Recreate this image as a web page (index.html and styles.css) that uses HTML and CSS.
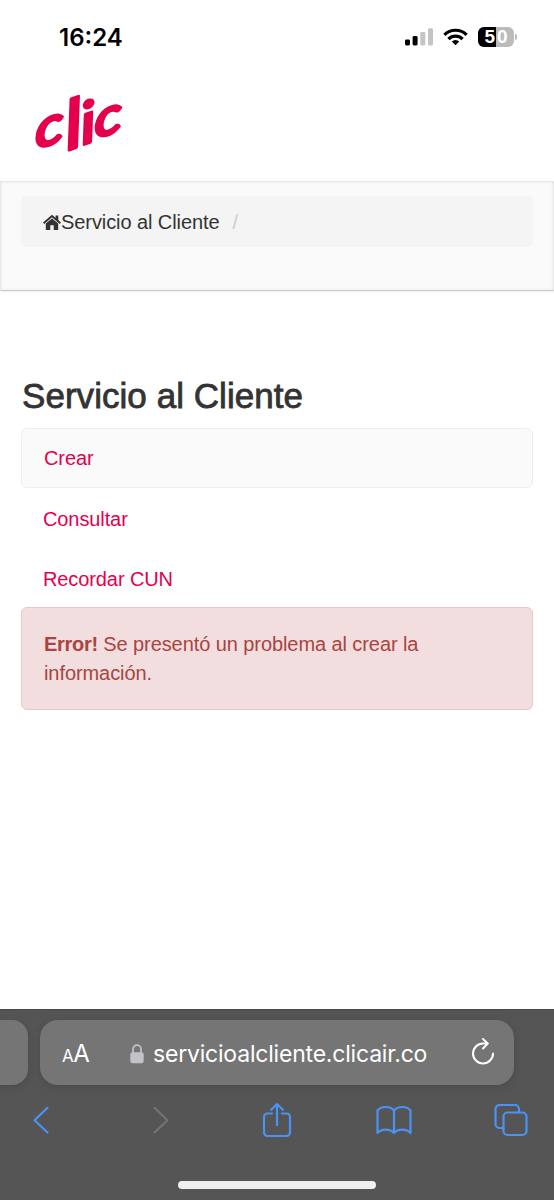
FILE: index.html
```html
<!DOCTYPE html>
<html lang="es">
<head>
<meta charset="utf-8">
<title>Servicio al Cliente</title>
<link rel="stylesheet" href="styles.css">
</head>
<body>
<div class="status">
  <span class="time">16:24</span>
  <div class="status-icons">
    <svg width="28" height="18" viewBox="0 0 28 18"><rect x="0" y="11.5" width="5" height="6" rx="1.4"/><rect x="7.6" y="8" width="5" height="9.5" rx="1.4"/><g fill="#c4c4c4"><rect x="15.3" y="4" width="5" height="13.5" rx="1.4"/><rect x="23" y="0.3" width="5" height="17.2" rx="1.4"/></g></svg>
    <svg class="wifi" width="25" height="18" viewBox="0 0 25 18"><g fill="none" stroke="#000" stroke-width="3.2"><path d="M1.4 6.8A15.8 15.8 0 0 1 23.6 6.8"/><path d="M5.4 11A10 10 0 0 1 19.6 11"/></g><path d="M8.8 13.4A5.3 5.3 0 0 1 16.2 13.4L12.5 17.2Z"/></svg>
    <div class="battery"><span class="level">5</span><span>0</span></div>
    <i class="battery-tip"></i>
  </div>
</div>
<header class="brand">
  <svg width="110" height="90" viewBox="24 80 110 90"><text class="logo" transform="translate(35 149) skewY(-16) scale(1.14 1)" x="0.500 28 41.500 52.500" y="0 11 9.500 6.500" rotate="0 -5 -5 0"><tspan font-size="54">c</tspan><tspan font-size="68">l</tspan><tspan font-size="58">i</tspan><tspan font-size="52">c</tspan></text></svg>
</header>
<nav class="subnav">
  <div class="breadcrumb">
    <svg width="18" height="17" viewBox="0 0 18 17"><path d="M9 4.500L15.200 9.500V16H10.700V11.300H7.300V16H2.800V9.500Z"/><path d="M.6 9.200L9 2L17.400 9.200" fill="none" stroke="#333" stroke-width="2"/><path d="M12.600 1.500H15.300V7L12.600 4.800Z"/></svg>
    <span>Servicio al Cliente</span><span class="slash">/</span>
  </div>
</nav>
<main class="content">
  <h1 class="title">Servicio al Cliente</h1>
  <div class="menu">
    <a class="item active">Crear</a>
    <a class="item">Consultar</a>
    <a class="item last">Recordar CUN</a>
  </div>
  <div class="alert"><b>Error!</b> Se presentó un problema al crear la información.</div>
</main>
<footer class="browser">
  <div class="tabs">
    <div class="previous"></div>
    <div class="address">
      <span class="aa"><small>A</small>A</span>
      <svg class="lock" width="14" height="20" viewBox="0 0 14 20"><rect x="0.3" y="8.3" width="13.4" height="11" rx="2.2" fill="#c3c2ca"/><path d="M3 9V5.2a4 4 0 0 1 8 0V9" fill="none" stroke="#c3c2ca" stroke-width="1.7"/></svg>
      <span class="url">servicioalcliente.clicair.co</span>
      <svg class="reload" width="24" height="28" viewBox="0 0 24 28" fill="none" stroke="#fff" stroke-width="2" stroke-linecap="round" stroke-linejoin="round"><path d="M16.500 5.500H12A10 10 0 1 0 22 15.500"/><path d="M12 1L16.700 5.500L12 10.500"/></svg>
    </div>
  </div>
  <div class="tools">
    <svg width="18" height="30" viewBox="0 0 18 30"><path d="M15.500 2.800L2.500 15.200L15.500 27.500"/></svg>
    <svg class="off" width="18" height="30" viewBox="0 0 18 30"><path d="M2.500 2.800L15.500 15.200L2.500 27.500"/></svg>
    <svg class="share" width="30" height="36" viewBox="0 0 30 36"><path d="M10 11.500H5.500a3.500 3.500 0 0 0-3.500 3.500V30.500a3.500 3.500 0 0 0 3.500 3.500H24.500a3.500 3.500 0 0 0 3.500-3.500V15a3.500 3.500 0 0 0-3.500-3.500H20M15 23V2.500M9.200 7.800L15 2L20.800 7.800"/></svg>
    <svg width="36" height="30" viewBox="0 0 36 30"><path d="M18 5.500C14.500.8 5 .8 1.500 5.500V28C5 23.500 14.500 23.500 18 28C21.500 23.500 31 23.500 34.500 28V5.500C31 .8 21.500 .8 18 5.500V28"/></svg>
    <svg width="34" height="34" viewBox="0 0 34 34"><rect x="9.500" y="9.500" width="23" height="22.500" rx="4"/><path d="M9.500 25H5.500a4 4 0 0 1-4-4V6a4 4 0 0 1 4-4H21a4 4 0 0 1 4 4v3.500"/></svg>
  </div>
  <div class="home"></div>
</footer>
</body>
</html>
```
FILE: styles.css
```css
* { box-sizing: border-box; }
body { margin: 0; width: 554px; height: 1200px; display: flex; flex-direction: column; overflow: hidden; background: #fff; color: #333; font: 20px/28.5px "Liberation Sans", Arial, sans-serif; }
svg { display: block; flex: none; }
.status { height: 76px; display: flex; justify-content: space-between; padding: 24px 37px 0 59px; color: #000; }
.time { font: 600 24px/28px Inter, sans-serif; }
.status-icons { display: flex; align-items: flex-start; padding-top: 4px; }
.wifi { margin-left: 10px; }
.battery { margin: -1px 0 0 10px; width: 36px; height: 20px; border-radius: 6px; overflow: hidden; display: flex; background: #bbb; color: #fff; font: 700 19px/20px "Liberation Sans", Arial, sans-serif; }
.battery span { flex: 1; padding-left: 1px; }
.battery .level { background: #000; text-align: right; padding: 0 1px 0 0; }
.battery-tip { width: 2px; height: 6px; margin: 6px 0 0 1px; background: #bbb; border-radius: 0 2px 2px 0; }
.brand { height: 105px; padding: 4px 24px; }
.logo { font-family: Lato, sans-serif; font-style: italic; font-weight: 400; fill: #e4004e; stroke: #e4004e; stroke-width: 3.2px; stroke-linejoin: round; }
.subnav { height: 110px; padding: 14px 20px 0; background: #fafafa; border: 1px solid #e8e8e8; border-bottom: 1px solid #ccc; box-shadow: inset 0 0 3px #e6e6e6, 0 1px 2px #eee; }
.breadcrumb { height: 51px; display: flex; align-items: center; padding: 2px 0 0 22px; background: #f4f4f4; border-radius: 5px; letter-spacing: -.08px; }
.breadcrumb svg { fill: #333; }
.slash { color: #ccc; margin-left: 13px; }
.content { padding: 85px 21px 0; flex: 1; }
.title { margin: 0; height: 52px; padding: 0 0 0 1px; font-size: 35px; line-height: 40px; font-weight: 400; -webkit-text-stroke: .8px #333; letter-spacing: .05px; }
.menu { display: flex; flex-direction: column; }
.item { height: 60px; padding: 16px 22px; color: #e4004e; letter-spacing: -.1px; }
.active { border: 1px solid #eee; border-radius: 6px; background: #fafafa; margin-bottom: 1px; padding-top: 15px; }
.last { height: 58px; }
.alert { height: 103px; padding: 22px 22px; border: 1px solid #e7c8cd; border-radius: 6px; background: #f2dede; color: #a94442; letter-spacing: -.08px; }
.alert b { letter-spacing: -.3px; }
.browser { height: 191px; background: #555; display: flex; flex-direction: column; box-shadow: inset 0 1px #494949; }
.tabs { display: flex; gap: 12px; padding-top: 11px; }
.previous { width: 28px; height: 65px; border-radius: 0 16px 16px 0; background: #757575; box-shadow: 0 2px 8px #0002; }
.address { width: 474px; height: 65px; border-radius: 18px; background: #757575; box-shadow: 0 2px 8px #0002; color: #fff; display: flex; align-items: center; padding: 2px 19px 0 22px; font-family: Inter, sans-serif; }
.aa { font-size: 24px; width: 68px; padding-top: 3px; letter-spacing: -.5px; }
.aa small { font-size: 17px; }
.url { font-size: 23px; margin-left: 9px; white-space: nowrap; letter-spacing: -.2px; padding-top: 1px; }
.reload { margin: -3px 0 0 auto; }
.tools { display: grid; grid-template-columns: repeat(5, 117.5px); justify-items: center; align-items: center; margin-left: -17.5px; height: 70px; }
.tools svg { fill: none; stroke: #4b92f4; stroke-width: 2.2px; stroke-linecap: round; stroke-linejoin: round; }
.tools .off { stroke: #737373; margin-left: 5px; }
.tools .share { margin-left: 2px; }
.home { width: 198px; height: 8px; margin: 26px auto 0 178px; border-radius: 4px; background: #efefef; }
```
